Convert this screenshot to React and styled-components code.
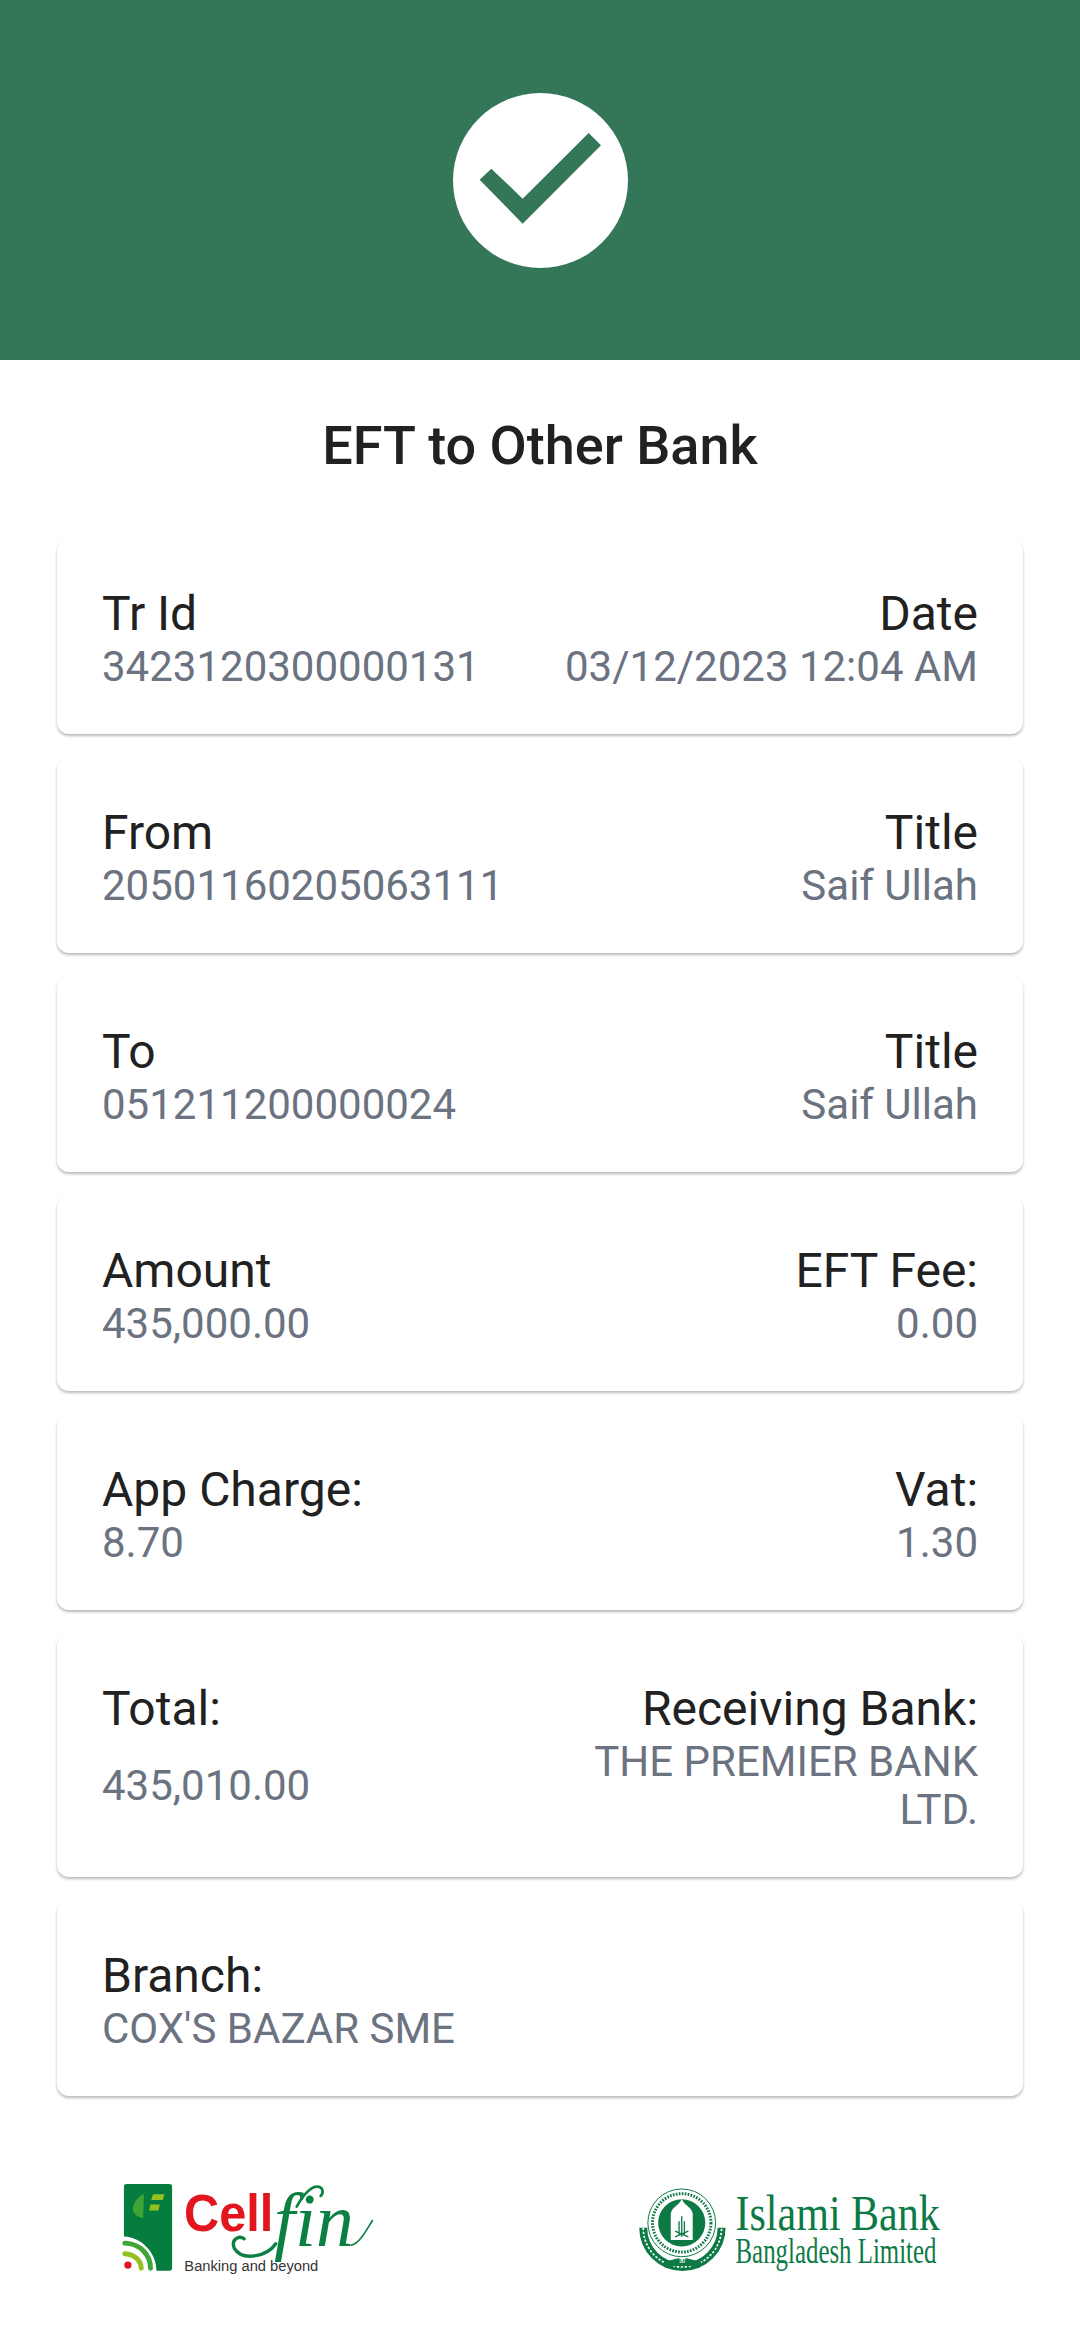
import React from 'react';
import styled, { createGlobalStyle } from 'styled-components';

const GlobalStyle = createGlobalStyle`
  html, body {
    margin: 0;
    padding: 0;
    background: #fff;
  }
  body {
    font-family: Roboto, "Liberation Sans", sans-serif;
  }
`;

const Page = styled.div`
  width: 1080px;
  height: 2349px;
  background: #fff;
  overflow: hidden;
`;

const Header = styled.header`
  height: 360px;
  background: #347758;
  display: flex;
  justify-content: center;
  align-items: center;
`;

const CheckCircle = styled.div`
  width: 175px;
  height: 175px;
  border-radius: 50%;
  background: #fff;
  svg {
    display: block;
    width: 100%;
    height: 100%;
  }
`;

const Title = styled.h1`
  margin: 0;
  padding-top: 55px;
  height: 124px;
  box-sizing: content-box;
  font-size: 54px;
  line-height: 62px;
  font-weight: 500;
  color: #212121;
  text-align: center;
`;

const CardList = styled.div`
  display: flex;
  flex-direction: column;
  gap: 24px;
  padding: 0 57px;
`;

const Card = styled.section`
  display: grid;
  grid-template-columns: 1fr 1fr;
  padding: 45px 45px 43px;
  border-radius: 12px;
  background: #fff;
  box-shadow: 0 2px 3px rgba(0, 0, 0, 0.28), 0 0 1px rgba(0, 0, 0, 0.03);
`;

const Label = styled.div`
  font-size: 48px;
  line-height: 59px;
  color: #212121;
  text-align: ${({ $right }) => ($right ? 'right' : 'left')};
`;

const Value = styled.div`
  font-size: 42px;
  line-height: 48px;
  color: #6b7280;
  align-self: center;
  text-align: ${({ $right }) => ($right ? 'right' : 'left')};
`;

const Footer = styled.footer`
  display: flex;
  justify-content: space-between;
  align-items: flex-start;
  padding: 84px 138px 0 120px;
`;

const CellfinSvg = styled.svg`
  display: block;
  width: 257px;
  height: 98px;
`;

const IslamiSvg = styled.svg`
  display: block;
  width: 305px;
  height: 88px;
  margin-top: 3px;
`;

const CARDS = [
  { left: ['Tr Id', '3423120300000131'], right: ['Date', '03/12/2023 12:04 AM'] },
  { left: ['From', '20501160205063111'], right: ['Title', 'Saif Ullah'] },
  { left: ['To', '051211200000024'], right: ['Title', 'Saif Ullah'] },
  { left: ['Amount', '435,000.00'], right: ['EFT Fee:', '0.00'] },
  { left: ['App Charge:', '8.70'], right: ['Vat:', '1.30'] },
  { left: ['Total:', '435,010.00'], right: ['Receiving Bank:', 'THE PREMIER BANK LTD.'] },
  { left: ['Branch:', "COX'S BAZAR SME"], right: ['', ''] },
];

function CellfinLogo() {
  return (
    <CellfinSvg viewBox="30 30 770 295">
      <path
        d="M48 42H177Q185 42 185 50V295Q185 303 177 303H138C138 250 95 203 40 200V50Q40 42 48 42Z"
        fill="#047d3e"
      />
      <path d="M100 72C80 82 67 100 67 120C70 135 85 142 98 145Z" fill="#3fa535" />
      <path d="M128 73H162L157 90H122ZM120 104H148L144 122H116Z" fill="#95c11f" />
      <path d="M43 220C90 222 120 255 120 296" fill="none" stroke="#3fa535" strokeWidth="15" strokeLinecap="round" />
      <path d="M43 252C72 254 92 272 92 296" fill="none" stroke="#95c11f" strokeWidth="15" strokeLinecap="round" />
      <circle cx="52" cy="286" r="11" fill="#e2161c" />
      <text
        x="221"
        y="185"
        fontFamily="Liberation Sans"
        fontWeight="700"
        fontSize="158"
        fill="#e2161c"
        textLength="269"
        lengthAdjust="spacingAndGlyphs"
      >
        Cell
      </text>
      <text
        x="492"
        y="230"
        fontFamily="Liberation Serif"
        fontStyle="italic"
        fontSize="227"
        fill="#0a8043"
        textLength="240"
        lengthAdjust="spacingAndGlyphs"
      >
        fin
      </text>
      {/* flourishes of the script "fin" */}
      <path
        d="M497 222C470 262 395 275 372 235C362 210 385 195 402 207"
        fill="none"
        stroke="#0a8043"
        strokeWidth="10"
        strokeLinecap="round"
      />
      <path
        d="M560 110C580 75 600 50 622 50C640 50 642 70 632 78"
        fill="none"
        stroke="#0a8043"
        strokeWidth="8"
        strokeLinecap="round"
      />
      <path d="M725 226C750 220 770 180 788 152" fill="none" stroke="#0a8043" strokeWidth="5" strokeLinecap="round" />
      <text
        x="222"
        y="303"
        fontFamily="Liberation Sans"
        fontSize="44"
        fill="#333"
        textLength="403"
        lengthAdjust="spacingAndGlyphs"
      >
        Banking and beyond
      </text>
    </CellfinSvg>
  );
}

function IslamiLogo() {
  return (
    <IslamiSvg viewBox="170 100 915 265">
      <path d="M187 235A118 118 0 0 0 423 235" fill="none" stroke="#0d7a45" strokeWidth="24" />
      <path d="M187 235A118 118 0 0 0 423 235" fill="none" stroke="#fff" strokeWidth="5" strokeDasharray="7 5" />
      <path d="M248 338L296 326V348L254 356ZM362 338L314 326V348L356 356Z" fill="#0d7a45" />
      <circle cx="303" cy="220" r="102" fill="#fff" stroke="#0d7a45" strokeWidth="3" />
      <circle cx="303" cy="220" r="88" fill="none" stroke="#0d7a45" strokeWidth="9" strokeDasharray="5 4" />
      <circle cx="303" cy="220" r="71" fill="#0d7a45" />
      <path d="M270 272V192C273 172 293 170 303 148C313 170 333 172 336 192V272Z" fill="#fff" />
      <path
        d="M303 200V262M295 215V258M311 215V258M283 245L323 262M323 245L283 262"
        fill="none"
        stroke="#0d7a45"
        strokeWidth="4"
      />
      <text x="305" y="340" textAnchor="middle" fontFamily="Liberation Sans" fontWeight="700" fontSize="18" fill="#0d7a45">
        BANK
      </text>
      <text
        x="465"
        y="242"
        fontFamily="Liberation Serif"
        fontSize="150"
        fill="#0d7a45"
        textLength="615"
        lengthAdjust="spacingAndGlyphs"
      >
        Islami Bank
      </text>
      <text
        x="465"
        y="342"
        fontFamily="Liberation Serif"
        fontSize="106"
        fill="#0d7a45"
        textLength="605"
        lengthAdjust="spacingAndGlyphs"
      >
        Bangladesh Limited
      </text>
    </IslamiSvg>
  );
}

export default function App() {
  return (
    <Page>
      <GlobalStyle />
      <Header>
        <CheckCircle>
          <svg viewBox="158 98 525 525">
            <polygon points="273,325 367,415 565,218 602,255 367,490 238,358" fill="#347758" />
          </svg>
        </CheckCircle>
      </Header>
      <Title>EFT to Other Bank</Title>
      <CardList>
        {CARDS.map(({ left, right }) => (
          <Card key={left[0]}>
            <Label>{left[0]}</Label>
            <Label $right>{right[0]}</Label>
            <Value>{left[1]}</Value>
            <Value $right>{right[1]}</Value>
          </Card>
        ))}
      </CardList>
      <Footer>
        <CellfinLogo />
        <IslamiLogo />
      </Footer>
    </Page>
  );
}
